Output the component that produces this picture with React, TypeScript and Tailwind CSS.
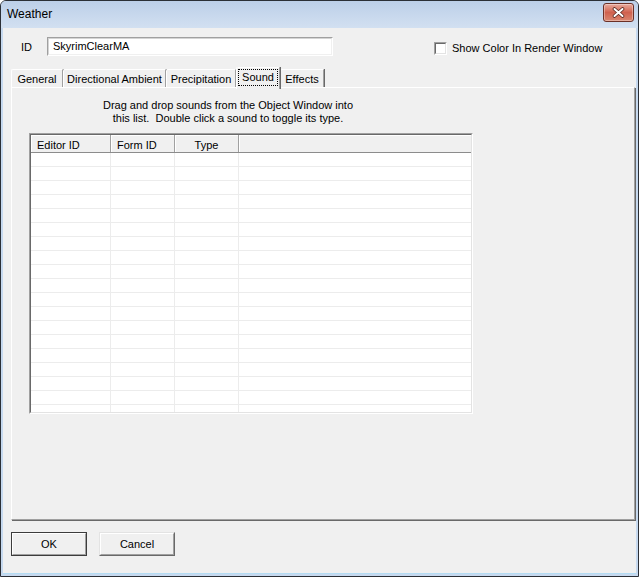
const tabs = [
  { label: 'General', width: 'w-[52px]' },
  { label: 'Directional Ambient', width: 'w-[103px]' },
  { label: 'Precipitation', width: 'w-[70px]' },
  { label: 'Sound', width: 'w-[44px]', selected: true },
  { label: 'Effects', width: 'w-[44px]' },
]

const columns = [
  { label: 'Editor ID', width: 'w-[80px]', cls: 'pl-[6px] border-r border-r-[#a0a0a0]' },
  { label: 'Form ID', width: 'w-[64px]', cls: 'pl-[6px] border-r border-r-[#a0a0a0]' },
  { label: 'Type', width: 'w-[64px]', cls: 'text-center border-r border-r-[#a0a0a0]' },
  { label: '', width: 'flex-1', cls: '' },
]

const rows = Array.from({ length: 19 }, (_, i) => i)

function CloseButton() {
  return (
    <div className="w-[31px] h-[19px] rounded-[3px] border border-[#6b3027] bg-linear-to-b from-[#e8aa9e] via-[#d0614e] to-[#d98670] flex items-center justify-center shadow-[inset_0_0_0_1px_rgba(255,255,255,0.35)]">
      <svg width="13" height="11" viewBox="0 0 13 11">
        <path d="M2.5 2 L10.5 9 M10.5 2 L2.5 9" stroke="#5a2a22" strokeWidth="3.6" strokeLinecap="round" />
        <path d="M2.5 2 L10.5 9 M10.5 2 L2.5 9" stroke="#ffffff" strokeWidth="2" strokeLinecap="round" />
      </svg>
    </div>
  )
}

function Tab({ label, width, selected }: { label: string; width: string; selected?: boolean }) {
  if (selected) {
    return (
      <div className={`${width} h-[22px] -mb-[2px] relative z-10 bg-[#f0f0f0] border-t border-l border-t-white border-l-white border-r border-r-[#a0a0a0] shadow-[1px_0_0_#696969] rounded-tl-[2px] flex flex-col items-center pt-[1px]`}>
        <span className="h-[17px] leading-[14px] px-[3px] border border-dotted border-black">{label}</span>
      </div>
    )
  }
  return (
    <div className={`${width} h-[18px] border-t border-l border-t-white border-l-white border-r border-r-[#a0a0a0] shadow-[1px_0_0_#696969] rounded-tl-[2px] text-center pt-[2px] leading-[14px]`}>
      {label}
    </div>
  )
}

export default function App() {
  return (
    <div className="w-[639px] h-[577px] font-['Liberation_Sans',Arial,sans-serif] text-[11px] text-black bg-white">
      <div className="w-full h-full flex flex-col border border-[#2b2f36] rounded-t-[6px] bg-[#c6d9ef] overflow-hidden">
        {/* title bar */}
        <div className="h-[27px] shrink-0 flex items-start justify-between bg-linear-to-b from-[#bccfe8] to-[#d2e0f1]">
          <div className="pl-[6px] pt-[5px] text-[12px] leading-[16px]">Weather</div>
          <div className="pt-[2px] pr-[4px]">
            <CloseButton />
          </div>
        </div>

        {/* client */}
        <div className="flex-1 flex flex-col mx-[2px] mb-[3px] bg-[#f0f0f0] shadow-[0_1px_0_#b4dcf3]">
          <div className="mt-[9px] h-[19px] flex items-start">
            <span className="ml-[18px] w-[26px] mt-[3px] leading-[14px]">ID</span>
            <div className="w-[286px] h-[19px] border border-t-[#a0a0a0] border-l-[#a0a0a0] border-r-white border-b-white">
              <div className="h-full border border-t-[#d4d4d4] border-l-[#d4d4d4] border-r-[#f0f0f0] border-b-[#f0f0f0] bg-white pl-[4px] leading-[14px]">
                SkyrimClearMA
              </div>
            </div>
            <div className="ml-[101px] mt-[5px] w-[13px] h-[13px] border border-t-[#a0a0a0] border-l-[#a0a0a0] border-r-white border-b-white">
              <div className="h-full border border-t-[#696969] border-l-[#696969] border-r-[#e3e3e3] border-b-[#e3e3e3] bg-white" />
            </div>
            <span className="ml-[5px] mt-[4px] leading-[14px]">Show Color In Render Window</span>
          </div>

          {/* tabs */}
          <div className="mt-[11px] h-[20px] flex items-end pl-[8px]">
            {tabs.map((t) => (
              <Tab key={t.label} label={t.label} width={t.width} selected={t.selected} />
            ))}
          </div>

          {/* tab panel */}
          <div className="ml-[8px] w-[624px] h-[433px] border border-t-white border-l-white border-r-[#a0a0a0] border-b-[#a0a0a0] shadow-[1px_1px_0_#696969] flex flex-col">
            <div className="mt-[11px] ml-[88px] w-[256px] text-center leading-[13px]">
              <div>Drag and drop sounds from the Object Window into</div>
              <div>this list.&nbsp; Double click a sound to toggle its type.</div>
            </div>

            <div className="mt-[8px] ml-[17px] w-[444px] h-[281px] border border-t-[#a0a0a0] border-l-[#a0a0a0] border-r-white border-b-white">
              <div className="h-full border border-t-[#696969] border-l-[#696969] border-r-[#e3e3e3] border-b-[#e3e3e3] bg-white overflow-hidden flex flex-col">
                <div className="h-[18px] shrink-0 flex bg-[#f0f0f0] border-b border-b-[#8c8c8c]">
                  {columns.map((c, i) => (
                    <div key={i} className={`${c.width} ${c.cls} h-full pt-[3px] leading-[14px] shadow-[inset_1px_1px_0_#ffffff]`}>
                      {c.label}
                    </div>
                  ))}
                </div>
                {rows.map((r) => (
                  <div key={r} className="h-[14px] shrink-0 flex border-b border-b-[#ececec]">
                    <div className="w-[80px] border-r border-r-[#ececec]" />
                    <div className="w-[64px] border-r border-r-[#ececec]" />
                    <div className="w-[64px] border-r border-r-[#ececec]" />
                    <div className="flex-1" />
                  </div>
                ))}
              </div>
            </div>
          </div>

          {/* buttons */}
          <div className="mt-[12px] ml-[8px] flex gap-[12px]">
            <button className="w-[76px] h-[24px] border border-[#3c3c3c] bg-[#f0f0f0]">
              <div className="h-full border border-t-white border-l-white border-r-[#a0a0a0] border-b-[#a0a0a0] flex items-center justify-center leading-[14px]">
                OK
              </div>
            </button>
            <button className="w-[76px] h-[24px] border border-t-[#e3e3e3] border-l-[#e3e3e3] border-r-[#696969] border-b-[#696969] bg-[#f0f0f0]">
              <div className="h-full border border-t-white border-l-white border-r-[#a0a0a0] border-b-[#a0a0a0] flex items-center justify-center leading-[14px]">
                Cancel
              </div>
            </button>
          </div>
        </div>
      </div>
    </div>
  )
}
